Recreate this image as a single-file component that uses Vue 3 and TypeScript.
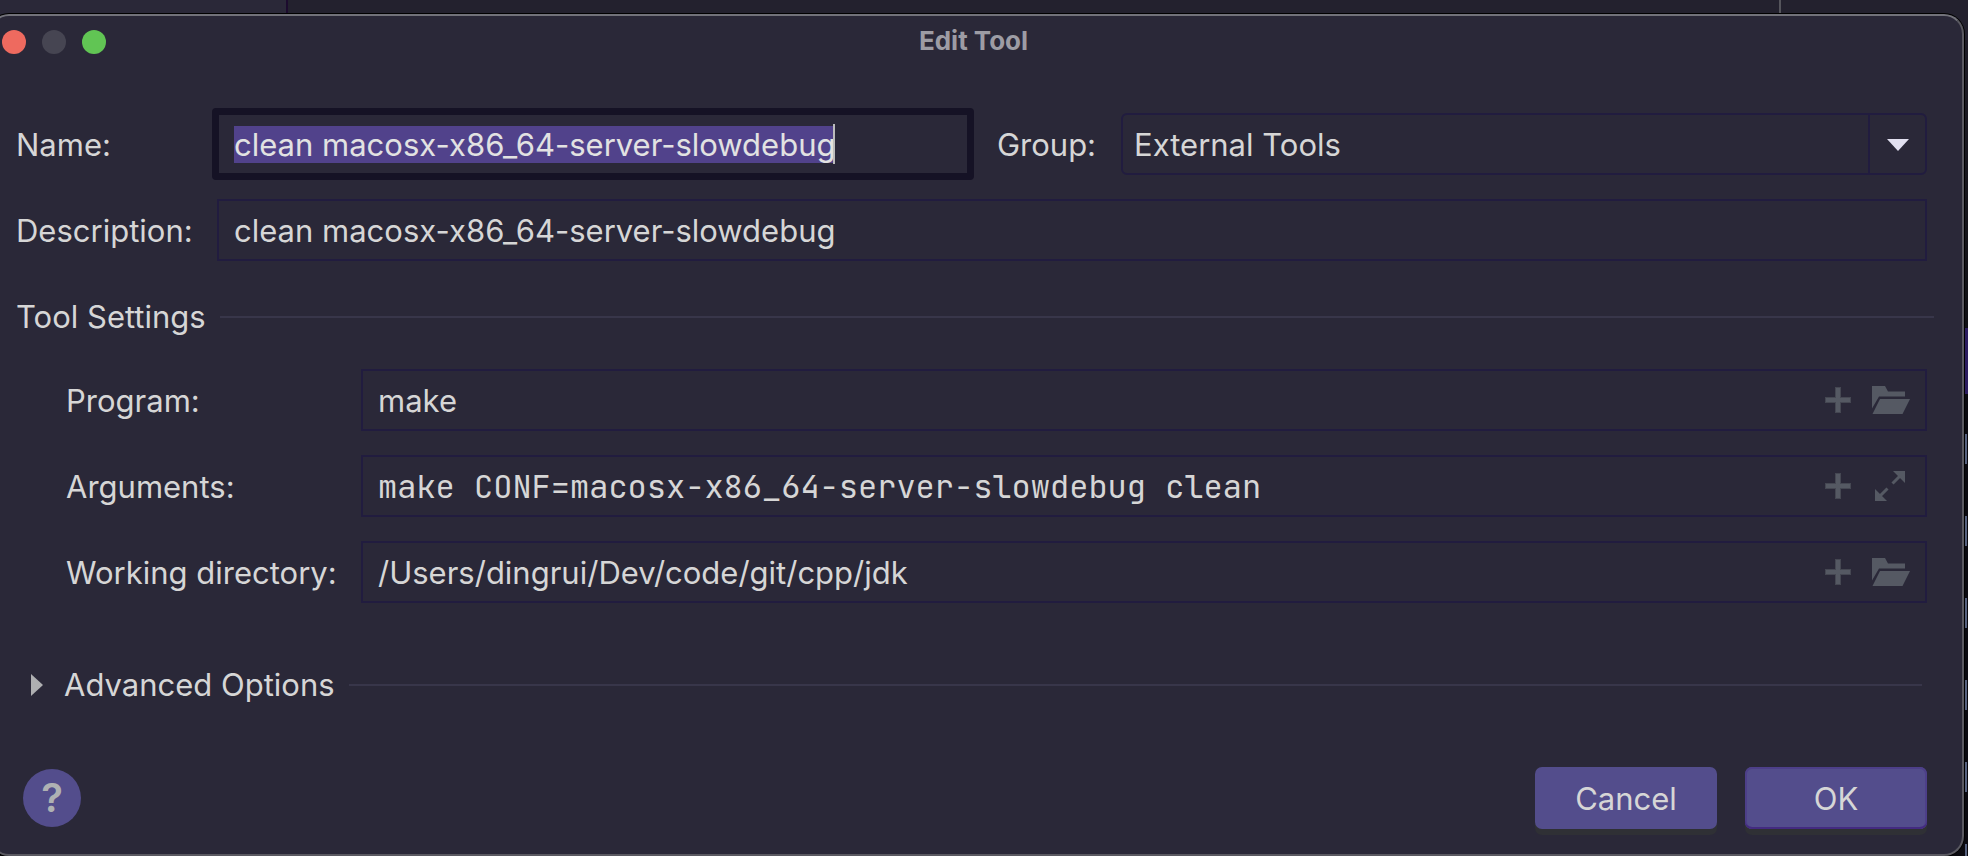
<script setup lang="ts">
import { nextTick, onMounted, ref } from 'vue'

type Action = 'folder' | 'expand'
interface Setting {
  id: string
  label: string
  value: string
  action: Action
  mono?: boolean
}

const name = ref('clean macosx-x86_64-server-slowdebug')
const description = ref('clean macosx-x86_64-server-slowdebug')
const group = ref('External Tools')
const settings = ref<Setting[]>([
  { id: 'program', label: 'Program:', value: 'make', action: 'folder' },
  { id: 'arguments', label: 'Arguments:', value: 'make CONF=macosx-x86_64-server-slowdebug clean', action: 'expand', mono: true },
  { id: 'workdir', label: 'Working directory:', value: '/Users/dingrui/Dev/code/git/cpp/jdk', action: 'folder' },
])

const nameInput = ref<HTMLInputElement | null>(null)
const caretLeft = ref(0)

onMounted(async () => {
  await nextTick()
  const el = nameInput.value
  if (!el) return
  el.focus()
  el.select()
  const style = getComputedStyle(el)
  const ctx = document.createElement('canvas').getContext('2d')
  if (ctx) {
    ctx.font = `${style.fontWeight} ${style.fontSize} ${style.fontFamily}`
    caretLeft.value = Math.round(
      ctx.measureText(name.value).width + parseFloat(style.paddingLeft) + parseFloat(style.borderLeftWidth),
    ) - 2
  }
})
</script>

<template>
  <div class="desktop">
    <div class="behind" aria-hidden="true"><i class="pane-a"></i><i class="pane-b"></i><i class="pane-c"></i></div>
    <div class="edge" aria-hidden="true">
      <i class="edge-top"></i>
      <i class="edge-accent"></i>
      <i v-for="n in 6" :key="n" class="edge-mark"></i>
    </div>
    <form class="dialog" @submit.prevent>
      <header class="titlebar">
        <div class="lights">
          <button type="button" class="light close" aria-label="Close"></button>
          <button type="button" class="light minimize" aria-label="Minimize" disabled></button>
          <button type="button" class="light maximize" aria-label="Zoom"></button>
        </div>
        <h1>Edit Tool</h1>
      </header>

      <div class="general">
        <label for="name">Name:</label>
        <div class="name-line">
          <div class="name-box">
            <input id="name" ref="nameInput" v-model="name" type="text" class="focused" spellcheck="false" />
            <span class="caret" :style="{ left: caretLeft + 'px' }"></span>
          </div>
          <label for="group">Group:</label>
          <div class="select-box">
            <select id="group" v-model="group"><option>External Tools</option></select>
            <span class="drop"><svg viewBox="0 0 22 12" width="22" height="12"><path d="M0 0h22L11 12z" fill="#e2e0f0" /></svg></span>
          </div>
        </div>
        <label for="description">Description:</label>
        <input id="description" v-model="description" type="text" class="field" spellcheck="false" />
      </div>

      <div class="section"><h2>Tool Settings</h2><hr /></div>

      <div class="settings">
        <template v-for="s in settings" :key="s.id">
          <label :for="s.id">{{ s.label }}</label>
          <div class="field combo">
            <input :id="s.id" v-model="s.value" type="text" :class="{ mono: s.mono }" spellcheck="false" />
            <button type="button" class="tool plus" aria-label="Insert macro">
              <svg viewBox="0 0 26 26" width="26" height="26"><path d="M10 0h6v10h10v6H16v10h-6V16H0v-6h10z" fill="#454752" /><path d="M11 1h4v10h10v4H15v10h-4V15H1v-4h10z" fill="#555963" /></svg>
            </button>
            <button v-if="s.action === 'folder'" type="button" class="tool" aria-label="Browse">
              <svg viewBox="0 0 38 28" width="38" height="28"><path d="M0 0h13l3 5.500h17V10.500H7L0 22.500z" fill="#555963" /><path d="M8 13h30l-7.500 15H.5z" fill="#555963" /></svg>
            </button>
            <button v-else type="button" class="tool" aria-label="Expand">
              <svg viewBox="0 0 38 30" width="38" height="30"><g fill="#555963"><path d="M21 0h12v12z" /><path d="M3 18v12h12z" /></g><path d="M28 5l-7.500 7.500M8 25l7.500-7.500" stroke="#555963" stroke-width="3" /></svg>
            </button>
          </div>
        </template>
      </div>

      <div class="section advanced">
        <button type="button" class="disclosure" aria-expanded="false">
          <svg viewBox="0 0 12 22" width="12" height="22"><path d="M0 0l12 11L0 22z" fill="#aeafb1" /></svg>
          Advanced Options
        </button>
        <hr />
      </div>

      <footer>
        <button type="button" class="help" aria-label="Help">?</button>
        <div class="actions">
          <button type="button" class="btn">Cancel</button>
          <button type="submit" class="btn primary">OK</button>
        </div>
      </footer>
    </form>
  </div>
</template>

<style>
html, body { margin: 0; background: #0b0a10; }
</style>

<style scoped>
* { box-sizing: border-box; }
.desktop {
  position: relative;
  min-height: 100vh;
  padding: 14px 4px 0 0;
  overflow: hidden;
  display: flex;
  font-family: Inter, "Liberation Sans", sans-serif;
  font-size: 31px;
  line-height: 40px;
  color: #d6d6d6;
}
.behind { position: absolute; inset: 0 0 auto 0; height: 40px; display: flex; background: #23212e; }
.pane-a { width: 288px; background: #2a2838; border-right: 2px solid #1c0b2e; }
.pane-b { flex: 1; border-right: 2px solid #55555c; }
.pane-c { width: 187px; }
.edge { position: absolute; right: 0; top: 40px; bottom: 0; width: 3px; background: #0b0a10; display: flex; flex-direction: column; }
.edge-top { flex: none; height: 288px; background: linear-gradient(#1e1c26, #101014); }
.edge-accent { flex: none; height: 66px; background: #2c1d60; }
.edge-mark { flex: none; width: 2px; height: 30px; margin: 40px 0 12px; background: #56617e; }
.dialog {
  position: relative;
  flex: 1;
  display: flex;
  flex-direction: column;
  margin: 0 0 0 -11px;
  padding: 0 35px 25px 25px;
  background: #2a2838;
  border: 2px solid #5a5961;
  border-top-color: #72727a;
  border-radius: 20px;
  box-shadow: 0 0 0 1px #000;
}
h1, h2 { margin: 0; font-weight: inherit; font-size: 31px; }
input, select, button { font: inherit; color: inherit; background: none; border: 0; margin: 0; padding: 0; min-width: 0; border-radius: 0; outline: none; }
label { padding-top: 2px; }
.titlebar { display: grid; grid-template-columns: 1fr auto 1fr; align-items: center; height: 52px; margin: 0 -18px 0 -14px; }
.lights { display: flex; gap: 16px; }
.light { width: 24px; height: 24px; border-radius: 50%; }
.close { background: #ee6a5f; }
.minimize { background: #464552; }
.maximize { background: #61c554; }
h1 { padding-bottom: 2px; font-size: 26px; font-weight: 700; color: #9d9ca4; }
.general { display: grid; grid-template-columns: 201px 1fr; align-items: center; row-gap: 19px; margin-top: 40px; }
.name-line { display: flex; align-items: center; margin-left: -5px; }
.name-box { position: relative; flex: 762 1 0; }
.focused { display: block; width: 100%; height: 72px; padding: 0 15px; border: 7px solid #151225; border-radius: 4px; }
.focused::selection { background: #51428b; color: #e2e2e2; }
.caret { position: absolute; top: 16px; width: 2px; height: 40px; background: #bcbcbc; }
.name-line label { margin: 0 25px 0 23px; }
.select-box { position: relative; flex: 806 1 0; }
select { appearance: none; display: block; width: 100%; height: 62px; padding: 2px 70px 0 11px; border: 2px solid #211c3f; border-radius: 6px; }
.drop { position: absolute; right: 2px; top: 2px; bottom: 2px; width: 57px; padding-top: 2px; border-left: 2px solid #211c3f; display: grid; place-items: center; pointer-events: none; }
.field { height: 62px; border: 2px solid #211c3f; padding: 0 15px; }
.section { display: flex; align-items: center; gap: 14px; margin: 36px -7px 0 0; }
hr { flex: 1; height: 2px; border: 0; margin: 0; background: #38364a; }
.settings { display: grid; grid-template-columns: 295px 1fr; align-items: center; row-gap: 24px; margin: 32px 0 0 50px; }
.combo { display: flex; align-items: center; }
.combo input { flex: 1; height: 58px; }
.mono { font-family: "JetBrains Mono", "Liberation Mono", monospace; font-size: 32px; }
.tool { display: grid; place-items: center; flex: none; }
.plus { margin-right: 21px; }
.advanced { margin: 62px 5px 0 15px; gap: 14px; }
.disclosure { display: flex; align-items: center; gap: 21px; }
footer { display: flex; align-items: center; justify-content: space-between; margin: 62px 0 0 7px; }
.help { width: 58px; height: 58px; border-radius: 50%; background: #534d8c; color: #afb1b3; font-size: 40px; font-weight: 600; }
.actions { display: flex; gap: 28px; }
.btn { width: 182px; height: 62px; padding-top: 2px; border-radius: 7px; background: #534d8c; box-shadow: 0 6px 0 #2f3035; }
.primary { box-shadow: inset 0 -2px 0 #432a80, inset 0 0 0 2px #4d3f89, 0 6px 0 #2f3035; }
</style>
